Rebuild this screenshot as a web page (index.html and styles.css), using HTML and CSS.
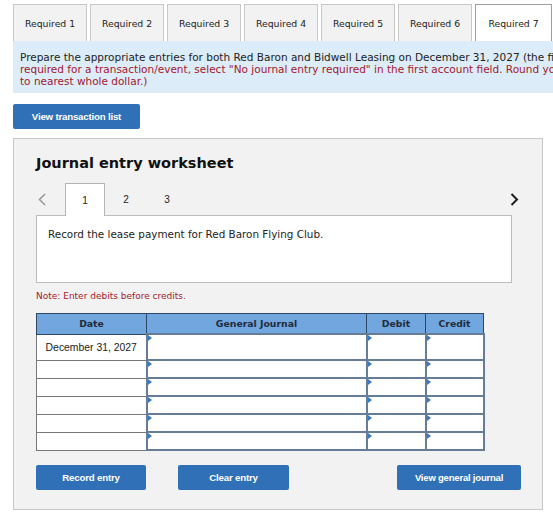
FILE: index.html
```html
<!DOCTYPE html>
<html>
<head>
<meta charset="utf-8">
<link rel="stylesheet" href="styles.css">
</head>
<body>
<div class="page">
  <div class="tabs">
    <div class="tab">Required 1</div>
    <div class="tab">Required 2</div>
    <div class="tab">Required 3</div>
    <div class="tab">Required 4</div>
    <div class="tab">Required 5</div>
    <div class="tab">Required 6</div>
    <div class="tab active">Required 7</div>
  </div>
  <div class="info">
    <div class="line">Prepare the appropriate entries for both Red Baron and Bidwell Leasing on December 31, 2027 (the first lease payment). <span class="red">(If no entry is</span></div>
    <div class="line red">required for a transaction/event, select "No journal entry required" in the first account field. Round your answers</div>
    <div class="line red">to nearest whole dollar.)</div>
  </div>
  <button class="btn btn-list">View transaction list</button>
  <div class="panel">
    <h2 class="title">Journal entry worksheet</h2>
    <div class="nav">
      <span class="arrow prev"><svg width="9" height="13" viewBox="0 0 9 13"><polyline points="7,1 1.5,6.5 7,12" fill="none" stroke="#9a9a9a" stroke-width="1.6"/></svg></span>
      <div class="step active">1</div>
      <div class="step">2</div>
      <div class="step">3</div>
      <span class="spacer"></span>
      <span class="arrow next"><svg width="9" height="13" viewBox="0 0 9 13"><polyline points="1.5,1 7,6.5 1.5,12" fill="none" stroke="#1e1e1e" stroke-width="2"/></svg></span>
    </div>
    <div class="desc">Record the lease payment for Red Baron Flying Club.</div>
    <div class="note">Note: Enter debits before credits.</div>
    <table class="journal">
      <thead>
        <tr><th class="c-date">Date</th><th class="c-gj">General Journal</th><th class="c-dr">Debit</th><th class="c-cr">Credit</th></tr>
      </thead>
      <tbody>
        <tr class="first"><td class="date">December 31, 2027</td><td class="inp"></td><td class="inp"></td><td class="inp"></td></tr>
        <tr><td class="date"></td><td class="inp"></td><td class="inp"></td><td class="inp"></td></tr>
        <tr><td class="date"></td><td class="inp"></td><td class="inp"></td><td class="inp"></td></tr>
        <tr><td class="date"></td><td class="inp"></td><td class="inp"></td><td class="inp"></td></tr>
        <tr><td class="date"></td><td class="inp"></td><td class="inp"></td><td class="inp"></td></tr>
        <tr><td class="date"></td><td class="inp"></td><td class="inp"></td><td class="inp"></td></tr>
      </tbody>
    </table>
    <div class="actions">
      <button class="btn btn-record">Record entry</button>
      <button class="btn btn-clear">Clear entry</button>
      <span class="spacer"></span>
      <button class="btn btn-view">View general journal</button>
    </div>
  </div>
</div>
</body>
</html>
```
FILE: styles.css
```css
html, body {
  margin: 0;
  padding: 0;
  background: #ffffff;
  overflow: hidden;
}
body {
  width: 553px;
  height: 518px;
  font-family: "DejaVu Sans", Verdana, sans-serif;
  color: #222222;
}
.page {
  padding: 4px 0 0 13px;
  width: 700px;
}
.tabs {
  display: flex;
  gap: 3px;
}
.tab {
  width: 72px;
  height: 36px;
  border: 1px solid #c8c8c8;
  border-bottom: none;
  background: #f2f2f2;
  font-size: 9.3px;
  display: flex;
  align-items: center;
  justify-content: center;
  color: #222;
}
.tab.active {
  background: #ffffff;
  border-color: #9e9e9e;
  width: 75px;
}
.info {
  background: #dcecf9;
  padding: 10px 7px 6px 7px;
  font-size: 10.5px;
  line-height: 12px;
  width: 680px;
  box-sizing: border-box;
}
.info .line {
  white-space: nowrap;
}
.red {
  color: #a3182d;
}
.btn {
  display: block;
  border: none;
  border-radius: 2px;
  background: #2f70b6;
  color: #ffffff;
  font-family: "Liberation Sans", Arial, sans-serif;
  font-weight: bold;
  font-size: 9.7px;
  letter-spacing: -0.2px;
  height: 25px;
  padding: 0;
  cursor: pointer;
}
.btn-list {
  margin-top: 11px;
  width: 127px;
}
.panel {
  margin-top: 9px;
  width: 530px;
  box-sizing: border-box;
  background: #f2f2f2;
  border: 1px solid #c9c9c9;
  padding: 15px 30px 19px 22px;
}
.title {
  margin: 0;
  font-size: 14.5px;
  line-height: 18px;
  font-weight: bold;
  color: #111;
}
.nav {
  margin-top: 11px;
  margin-right: -7px;
  display: flex;
  align-items: flex-end;
  height: 32px;
}
.arrow {
  display: flex;
  align-items: center;
  height: 32px;
}
.prev {
  width: 29px;
  padding-left: 2px;
  box-sizing: border-box;
}
.step {
  width: 40px;
  height: 32px;
  margin-right: 1px;
  box-sizing: border-box;
  display: flex;
  align-items: center;
  justify-content: center;
  font-size: 10px;
  font-family: "Liberation Sans", Arial, sans-serif;
  color: #222;
}
.step.active {
  background: #ffffff;
  border: 1px solid #b4b4b4;
  border-bottom: none;
  height: 33px;
  margin-bottom: -1px;
  position: relative;
  z-index: 1;
}
.spacer {
  flex: 1;
}
.desc {
  background: #ffffff;
  border: 1px solid #bdbdbd;
  height: 68px;
  box-sizing: border-box;
  padding: 12px 11px;
  font-size: 10.4px;
  line-height: 12px;
  color: #222;
}
.note {
  margin-top: 7px;
  font-size: 9px;
  line-height: 12px;
  color: #a3182d;
}
.journal {
  margin-top: 11px;
  border-collapse: collapse;
  table-layout: fixed;
  width: 443px;
}
.journal th {
  background: #72a6de;
  border: 1px solid #2c4865;
  height: 19px;
  padding: 0;
  font-size: 9.3px;
  font-weight: bold;
  color: #1f2c3b;
  text-align: center;
}
.c-date { width: 109px; }
.c-gj { width: 219px; }
.c-dr { width: 58px; }
.c-cr { width: 57px; }
.journal td {
  padding: 0;
  height: 16px;
  background: #ffffff;
}
.journal tr.first td {
  height: 24px;
}
.journal td.date {
  border: 1px solid #777777;
  font-family: "Liberation Sans", Arial, sans-serif;
  font-size: 10.4px;
  color: #222;
  text-align: center;
}
.journal td.inp {
  border: 2px solid #677c98;
  position: relative;
}
.journal td.inp::before {
  content: "";
  position: absolute;
  left: 0;
  top: 0;
  border-top: 3px solid transparent;
  border-bottom: 3px solid transparent;
  border-left: 4px solid #3a78c2;
}
.actions {
  margin-top: 14px;
  display: flex;
  width: 485px;
}
.btn-record {
  width: 110px;
}
.btn-clear {
  width: 111px;
  margin-left: 32px;
}
.btn-view {
  width: 124px;
  font-size: 9.5px;
}
```
